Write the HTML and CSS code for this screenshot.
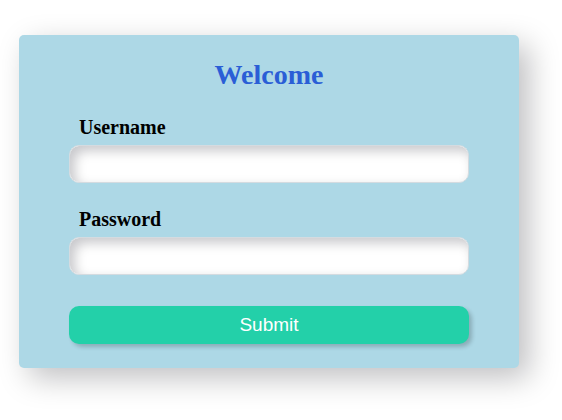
FILE: index.html
```html
<!DOCTYPE html>
<html>
<head>
<meta charset="utf-8">
<link rel="stylesheet" href="styles.css">
</head>
<body>
<form class="card">
  <h2 class="title">Welcome</h2>
  <div class="field">
    <label class="label">Username</label>
    <input class="input" type="text">
  </div>
  <div class="field">
    <label class="label">Password</label>
    <input class="input" type="password">
  </div>
  <button class="submit" type="button">Submit</button>
</form>
</body>
</html>
```
FILE: styles.css
```css
html, body {
  margin: 0;
  padding: 0;
  background: #ffffff;
}
body {
  min-height: 420px;
  padding-top: 35px;
  box-sizing: border-box;
}
.card {
  box-sizing: border-box;
  width: 500px;
  height: 333px;
  margin: 0 0 0 19px;
  padding: 24px 50px 0;
  background: #add8e6;
  border-radius: 5px;
  box-shadow: 10px 10px 30px rgba(0, 0, 10, 0.25);
  display: flex;
  flex-direction: column;
}
.title {
  margin: 0;
  font-family: "Liberation Serif", serif;
  font-weight: bold;
  font-size: 28px;
  line-height: 32px;
  color: #2a5ed6;
  text-align: center;
}
.field {
  display: flex;
  flex-direction: column;
  gap: 6px;
  margin-top: 25px;
}
.label {
  padding-left: 10px;
  font-family: "Liberation Serif", serif;
  font-weight: bold;
  font-size: 20px;
  line-height: 23px;
  color: #000;
}
.input {
  box-sizing: border-box;
  width: 400px;
  height: 38px;
  border: 1px solid #d4dbe0;
  border-radius: 10px;
  background: #fff;
  box-shadow: inset 5px 5px 12px rgba(0, 0, 20, 0.22);
  outline: none;
}
.submit {
  box-sizing: border-box;
  width: 400px;
  height: 38px;
  margin-top: 31px;
  border: none;
  border-radius: 10px;
  background: #23d0a9;
  color: #fff;
  font-family: "Liberation Sans", Arial, sans-serif;
  font-size: 19px;
  box-shadow: 3px 3px 4px rgba(0, 0, 0, 0.2);
}
```
